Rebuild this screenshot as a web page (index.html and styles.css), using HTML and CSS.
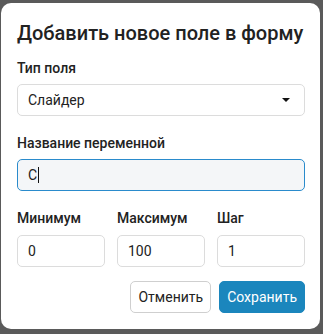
FILE: index.html
```html
<!DOCTYPE html>
<html lang="ru">
<head>
  <meta charset="UTF-8">
  <meta name="viewport" content="width=device-width, initial-scale=1.0">
  <title>Добавить новое поле</title>
  <link rel="stylesheet" href="styles.css">
</head>
<body>
  <div class="modal">
    <h2>Добавить новое поле в форму</h2>
    <div class="form-group">
      <label for="tip">Тип поля</label>
      <div class="select">
        <span>Слайдер</span>
        <span class="caret"></span>
      </div>
    </div>
    <div class="form-group">
      <label for="name">Название переменной</label>
      <div class="input focus">С<span class="cursor"></span></div>
    </div>
    <div class="row">
      <div class="form-group">
        <label>Минимум</label>
        <div class="input">0</div>
      </div>
      <div class="form-group">
        <label>Максимум</label>
        <div class="input">100</div>
      </div>
      <div class="form-group">
        <label>Шаг</label>
        <div class="input">1</div>
      </div>
    </div>
    <div class="buttons">
      <button class="btn">Отменить</button>
      <button class="btn primary">Сохранить</button>
    </div>
  </div>
</body>
</html>
```
FILE: styles.css
```css
body {
  margin: 0;
  padding: 3px 0 0 1px;
  background: #5a5a5a;
  font-family: Roboto, "Liberation Sans", sans-serif;
  color: #222;
}
.modal {
  width: 319px;
  height: 326px;
  box-sizing: border-box;
  background: #fff;
  border-radius: 10px;
  padding: 18px 15px 16px 16px;
}
h2 {
  margin: 0 0 15px;
  font-size: 20px;
  line-height: 24px;
  font-weight: 500;
  color: #222;
}
.form-group {
  margin-bottom: 19px;
}
.form-group label {
  display: block;
  font-size: 14px;
  line-height: 16px;
  font-weight: 500;
  margin-bottom: 8px;
}
.select, .input {
  height: 32px;
  box-sizing: border-box;
  border: 1px solid #dcdcdc;
  border-radius: 5px;
  padding: 0 10px;
  font-size: 14px;
  display: flex;
  align-items: center;
}
.select {
  justify-content: space-between;
}
.caret {
  width: 0;
  height: 0;
  border-left: 4px solid transparent;
  border-right: 4px solid transparent;
  border-top: 4px solid #111;
  margin-right: 4px;
}
.input.focus {
  border-color: #2a8bcc;
  background: #f4f6f8;
}
.cursor {
  display: inline-block;
  width: 1px;
  height: 16px;
  background: #111;
  margin-left: 1px;
}
.row {
  display: flex;
  gap: 12px;
}
.row .form-group {
  flex: 1;
  margin-bottom: 14px;
}
.row label {
  margin-bottom: 9px;
}
.buttons {
  display: flex;
  justify-content: flex-end;
  gap: 8px;
}
.btn {
  height: 32px;
  padding: 0 7px;
  font-family: Roboto, "Liberation Sans", sans-serif;
  font-size: 14px;
  border: 1px solid #cfcfcf;
  border-radius: 5px;
  background: #fff;
  color: #222;
}
.btn.primary {
  background: #1b86bd;
  border-color: #1b86bd;
  color: #fff;
}
```
